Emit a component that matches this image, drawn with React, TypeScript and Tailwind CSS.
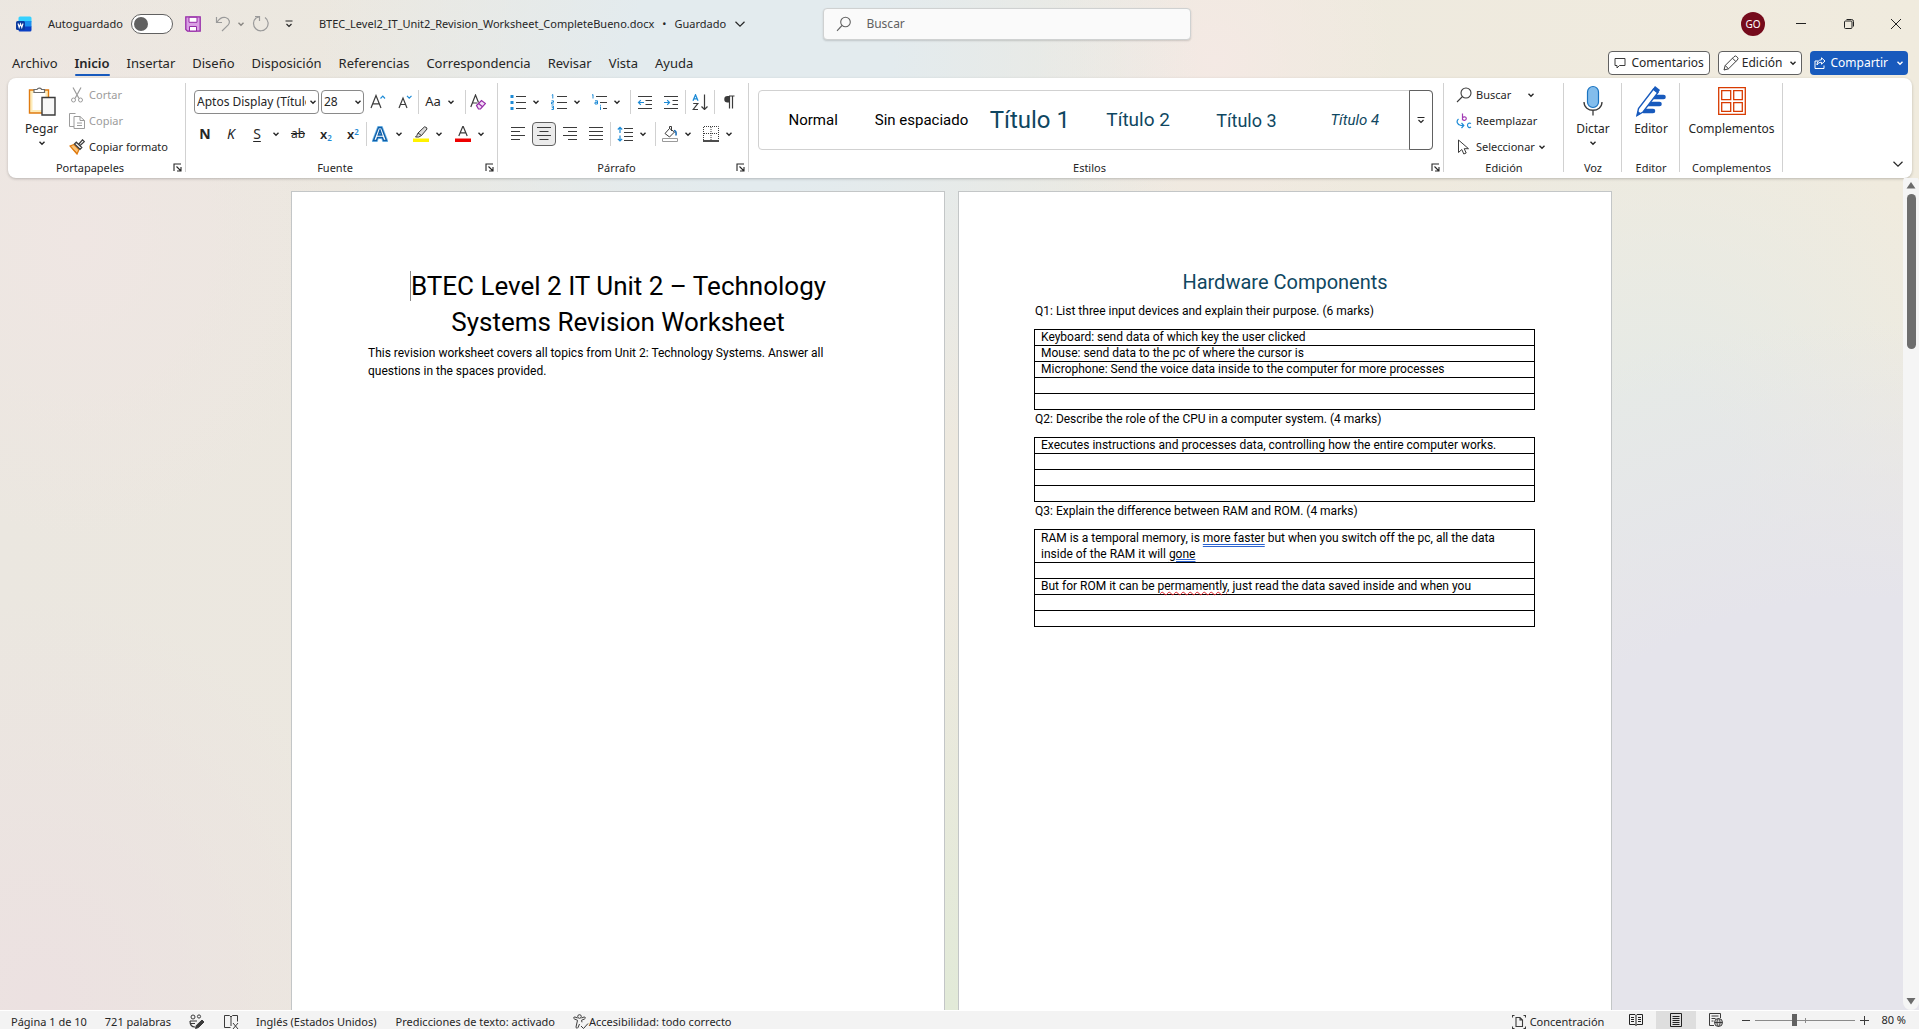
import React from "react";

type Kids = { children?: React.ReactNode };

/* ---------- shared pieces ---------- */

function Svg({ w = 16, h = 16, children, className = "" }: Kids & { w?: number; h?: number; className?: string }) {
  return (
    <svg width={w} height={h} viewBox={`0 0 ${w} ${h}`} fill="none" stroke="#3b3b3b" className={`shrink-0 ${className}`} aria-hidden="true">
      {children}
    </svg>
  );
}

function Chevron({ light = false }: { light?: boolean }) {
  return (
    <Svg w={8} h={8}>
      <path d="M1.5 2.8 4 5.2 6.5 2.8" stroke={light ? "#ffffff" : "#262626"} strokeWidth="1.4" />
    </Svg>
  );
}

function WideChevron() {
  return (
    <Svg w={12} h={8}>
      <path d="M1.5 1.8 6 6.2 10.5 1.8" stroke="#262626" strokeWidth="1.2" />
    </Svg>
  );
}

function IconButton({ label, children, className = "w-6" }: Kids & { label: string; className?: string }) {
  return (
    <button aria-label={label} title={label} className={`flex h-6 shrink-0 items-center justify-center ${className}`}>
      {children}
    </button>
  );
}

function Drop({ label }: { label: string }) {
  return (
    <button aria-label={label} className="flex h-6 w-3 shrink-0 items-center justify-center">
      <Chevron />
    </button>
  );
}

function Rule({ className = "" }: { className?: string }) {
  return <span className={`h-6 w-px shrink-0 bg-[#d1d1d1] ${className}`} />;
}

function Group({ label, launcher = false, className = "", children }: Kids & { label: string; launcher?: boolean; className?: string }) {
  return (
    <section aria-label={label} className={`relative flex shrink-0 flex-col ${className}`}>
      <div className="flex h-20 flex-col">{children}</div>
      <div className={`flex h-5 items-center justify-center text-[11px] leading-4 ${launcher ? "pr-3.5" : ""}`}>{label}</div>
      {launcher && (
        <button aria-label={`Opciones de ${label}`} className="absolute right-1 bottom-1.5">
          <Svg w={9} h={9}>
            <path d="M1 8V1h7M3.5 3.5 8 8M8 4v4H4" stroke="#262626" strokeWidth="1.1" />
          </Svg>
        </button>
      )}
      <span className="absolute top-[5px] right-0 h-[89px] w-px bg-[#d1d1d1]" />
    </section>
  );
}

/* ---------- title bar ---------- */

function TitleBar() {
  return (
    <header className="flex h-12 shrink-0 items-center text-[11px]">
      <div className="flex min-w-0 flex-[526_1_0%] items-center pl-4">
        <svg width="16" height="16" viewBox="0 0 16 16" aria-label="Word" className="shrink-0">
          <rect x="2.5" y="0.5" width="13" height="6" rx="1.5" fill="#35d1ff" />
          <rect x="2.5" y="5" width="13" height="6" fill="#1a8ff0" />
          <path d="M2.500 10.500h13V14a1.500 1.500 0 0 1-1.500 1.500H4A1.500 1.500 0 0 1 2.500 14z" fill="#0a3fc4" />
          <rect x="0" y="5" width="9" height="9" rx="1.500" fill="#0b3a9e" />
          <path d="m2 7.500 1.200 4 1.300-3.600 1.300 3.600 1.200-4" stroke="#fff" strokeWidth="1.100" fill="none" />
        </svg>
        <label className="ml-4 flex items-center gap-2">
          <span>Autoguardado</span>
          <span className="relative flex items-center">
            <input type="checkbox" role="switch" className="h-5 w-[42px] appearance-none rounded-full border border-[#616161] bg-white" />
            <span className="pointer-events-none absolute left-[3px] h-3.5 w-3.5 rounded-full bg-[#616161]" />
          </span>
        </label>
        <IconButton label="Guardar" className="ml-2 w-6">
          <Svg>
            <path d="M.8.800h14.400v14.400H2.500L.8 13.500z" fill="#d9a0e4" stroke="#962ba8" strokeWidth="1.300" />
            <path d="M4 1.300h8v5H4z" fill="#fff" stroke="#962ba8" />
            <path d="M4.500 10.500h7v4.500h-7z" fill="#fff" stroke="#962ba8" />
          </Svg>
        </IconButton>
        <IconButton label="Deshacer" className="ml-1.5 w-6">
          <Svg>
            <path d="M1.500 1v5.500H7M2 6.200C4 3 7 .800 10.500 1.500c4 1 5 5 2.500 7.700L7 15" stroke="#9a9a9a" strokeWidth="1.200" />
          </Svg>
        </IconButton>
        <span className="flex w-3 justify-center opacity-50"><Chevron /></span>
        <IconButton label="Rehacer" className="ml-0.5 w-6">
          <Svg w={18} h={18}>
            <path d="M3 1.500h4.500v4.500M13 2.500a7.300 7.300 0 1 1-9 .5L7 2" stroke="#9a9a9a" strokeWidth="1.200" />
          </Svg>
        </IconButton>
        <IconButton label="Personalizar barra" className="ml-1 w-6">
          <Svg w={8} h={8}>
            <path d="M.500 1h7M1.500 4 4 6.500 6.500 4" stroke="#262626" strokeWidth="1.200" />
          </Svg>
        </IconButton>
        <button className="ml-[18px] flex items-center gap-2 whitespace-nowrap">
          <span>BTEC_Level2_IT_Unit2_Revision_Worksheet_CompleteBueno.docx</span>
          <span>•</span>
          <span>Guardado</span>
          <WideChevron />
        </button>
      </div>
      <label className="flex h-8 w-[368px] shrink-0 items-center gap-3.5 rounded border border-[#cfd1d1] bg-[#fafafa] px-3 shadow-[0_1px_2px_rgba(0,0,0,0.16)]">
        <Svg>
          <circle cx="9.500" cy="6" r="4.800" stroke="#616161" strokeWidth="1.100" />
          <path d="M6 9.500 1 14.800" stroke="#616161" strokeWidth="1.100" />
        </Svg>
        <input type="text" placeholder="Buscar" aria-label="Buscar" className="min-w-0 flex-1 bg-transparent text-[12px] outline-none placeholder:text-[#616161]" />
      </label>
      <div className="flex flex-[474_1_0%] items-center justify-end">
        <button aria-label="Cuenta" className="mr-3 flex h-6 w-6 items-center justify-center rounded-full bg-[#750b1c] text-[10px] text-white">GO</button>
        <button aria-label="Minimizar" className="flex h-12 w-12 items-center justify-center"><Svg w={10} h={10}><path d="M0 4.500h10" stroke="#222" /></Svg></button>
        <button aria-label="Restaurar" className="flex h-12 w-12 items-center justify-center">
          <Svg w={10} h={10}><path d="M.500 3a1 1 0 0 1 1-1H7a1 1 0 0 1 1 1v5.500a1 1 0 0 1-1 1H1.500a1 1 0 0 1-1-1zM2.500.500h5a2 2 0 0 1 2 2v5" stroke="#222" /></Svg>
        </button>
        <button aria-label="Cerrar" className="flex h-12 w-[46px] items-center justify-center"><Svg w={10} h={10}><path d="m0 0 10 10M10 0 0 10" stroke="#222" /></Svg></button>
      </div>
    </header>
  );
}

/* ---------- tabs ---------- */

const TABS = ["Archivo", "Inicio", "Insertar", "Diseño", "Disposición", "Referencias", "Correspondencia", "Revisar", "Vista", "Ayuda"];

function TabRow() {
  return (
    <div className="flex h-[30px] shrink-0 items-start justify-between pr-[11px] pl-3">
      <nav className="flex gap-[17px] pt-[3px] text-[13px] leading-6">
        {TABS.map((t) => (
          <button key={t} className={t === "Inicio" ? "relative font-semibold" : ""}>
            {t}
            {t === "Inicio" && <span className="absolute inset-x-0 -bottom-px h-0.5 rounded bg-[#185abd]" />}
          </button>
        ))}
      </nav>
      <div className="flex gap-2 pt-[3px] text-[12px]">
        <button className="flex h-6 items-center gap-[5px] rounded border border-[#616161] bg-white px-[5px]">
          <Svg w={12} h={12}><path d="M1 1.500h10v7H5.500L3 11V8.500H1z" /></Svg>
          Comentarios
        </button>
        <button className="flex h-6 items-center gap-[3px] rounded border border-[#616161] bg-white px-1">
          <Svg>
            <path d="m1 15 1.200-4.500L11 1.700a1.900 1.900 0 0 1 2.800 0l.500.500a1.900 1.900 0 0 1 0 2.800L5.500 13.800zM9.500 3.200l3.300 3.300M2.200 10.500l3.300 3.300" />
          </Svg>
          Edición
          <span className="ml-1"><Chevron /></span>
        </button>
        <button className="flex h-6 items-center gap-1 rounded bg-[#185abd] px-1 text-white">
          <Svg w={12} h={12}>
            <path d="M4 4H1v7.500h9V8.500M7.500.800 11 4 7.500 7.200V5.300C5.500 5.300 4 6 3 8c0-3 1.500-5 4.500-5.300z" stroke="#fff" />
          </Svg>
          Compartir
          <span className="ml-1"><Chevron light /></span>
        </button>
      </div>
    </div>
  );
}

/* ---------- ribbon ---------- */

function SmallCommand({ icon, label, disabled = false, drop = "" }: { icon: React.ReactNode; label: string; disabled?: boolean; drop?: string }) {
  return (
    <button disabled={disabled} className={`flex h-[26px] items-center gap-1 text-[11px] whitespace-nowrap ${disabled ? "text-[#9c9c9c]" : ""}`}>
      {icon}
      <span>{label}</span>
      {drop && <span className={drop}><Chevron /></span>}
    </button>
  );
}

function BigCommand({ icon, label, drop = false }: { icon: React.ReactNode; label: string; drop?: boolean }) {
  return (
    <button className="flex flex-col items-center pt-[7px] text-[12px] leading-4">
      <span className="flex h-9 items-start justify-center">{icon}</span>
      <span>{label}</span>
      {drop && <span className="mt-0.5"><Chevron /></span>}
    </button>
  );
}

function Clipboard() {
  return (
    <Group label="Portapapeles" launcher className="w-[178px]">
      <div className="flex gap-[11px] pl-[17px]">
        <BigCommand
          label="Pegar"
          drop
          icon={
            <Svg w={28} h={32}>
              <path d="M1.500 5h19v23h-19z" fill="#fdebb8" stroke="#e07b10" strokeWidth="1.400" />
              <path d="M4.500 8h13v17h-13z" fill="#fff" stroke="none" />
              <path d="M6 7.500V4.500h3a2.800 2.800 0 0 1 4.500-.3v.3h3v3z" fill="#fff" stroke="#6b6b6b" strokeWidth="1.200" />
              <path d="M14 12.500h13V30H14z" fill="#f8f8f8" strokeWidth="1.400" />
            </Svg>
          }
        />
        <div className="flex flex-col pt-1">
          <SmallCommand
            disabled
            label="Cortar"
            icon={<Svg><path d="m4 .500 6 11M12 .500l-6 11" stroke="#9c9c9c" strokeWidth="1.200" /><circle cx="4.500" cy="13" r="2" stroke="#9c9c9c" /><circle cx="11.500" cy="13" r="2" stroke="#9c9c9c" /></Svg>}
          />
          <SmallCommand
            disabled
            label="Copiar"
            icon={<Svg><path d="M5 13.500H.500V.500h6M5 3.500h6l4.500 4v8H5z" stroke="#9c9c9c" /><path d="M11 3.500v4h4.500M8 10h5M8 12.500h5" stroke="#9c9c9c" /></Svg>}
          />
          <SmallCommand
            label="Copiar formato"
            icon={
              <Svg>
                <path d="m1 7 4-1.500 5 5L8 15z" fill="#f9c47a" stroke="#e07b10" strokeWidth="1.300" />
                <path d="m3.500 10 4 3.500" stroke="#e07b10" />
                <path d="m5.500 5 1.800-1.800 5.500 5.300-1.800 1.800zM9.500 5.500 13.500.800l1.800 1.800-4.500 4.200" fill="#fff" strokeWidth="1.200" />
              </Svg>
            }
          />
        </div>
      </div>
    </Group>
  );
}

function FontGroup() {
  return (
    <Group label="Fuente" launcher className="w-[312px]">
      <div className="flex h-9 items-end pl-2">
        <span className="relative flex items-center">
          <select aria-label="Fuente" className="h-6 w-[125px] appearance-none rounded border border-[#8a8a8a] bg-white pr-3 pl-0.5 text-[12px]">
            <option>Aptos Display (Título)</option>
          </select>
          <span className="pointer-events-none absolute right-0.5 bg-white"><Chevron /></span>
        </span>
        <span className="relative ml-0.5 flex items-center">
          <select aria-label="Tamaño de fuente" className="h-6 w-[43px] appearance-none rounded border border-[#8a8a8a] bg-white pl-0.5 text-[12px]">
            <option>28</option>
          </select>
          <span className="pointer-events-none absolute right-0.5"><Chevron /></span>
        </span>
        <IconButton label="Aumentar tamaño" className="w-7">
          <Svg><path d="m1 14 5-12.500L11 14M2.800 9.800h6.400" strokeWidth="1.200" /><path d="m10.500 4.500 2.300-2.300L15 4.500" stroke="#1e8bd6" strokeWidth="1.200" /></Svg>
        </IconButton>
        <IconButton label="Reducir tamaño" className="w-[26px]">
          <Svg w={14}><path d="m1 14 4-10 4 10M2.500 10.500h5" strokeWidth="1.200" /><path d="m9 1.800 2.200 2.300 2.300-2.300" stroke="#1e8bd6" strokeWidth="1.200" /></Svg>
        </IconButton>
        <Rule />
        <IconButton label="Mayúsculas y minúsculas" className="ml-0.5 w-6 text-[13px]">Aa</IconButton>
        <Drop label="Más opciones de mayúsculas" />
        <Rule className="ml-2" />
        <IconButton label="Borrar formato" className="w-6">
          <Svg><path d="M.800 13 5.500 1l3 7.500M2.300 9h5" strokeWidth="1.200" /><path d="m6.500 11.500 5-5 4 3-5 5.500h-2zM8.500 9.500l4 3.300" fill="#f3dcf7" stroke="#962ba8" strokeWidth="1.200" /></Svg>
        </IconButton>
      </div>
      <div className="mt-2 flex h-6 items-center pl-1.5 leading-5">
        <IconButton label="Negrita" className="w-[26px] text-[14px] font-bold">N</IconButton>
        <IconButton label="Cursiva" className="w-[26px] text-[14px] italic">K</IconButton>
        <IconButton label="Subrayado" className="w-[26px] text-[14px] underline underline-offset-2">S</IconButton>
        <Drop label="Estilo de subrayado" />
        <IconButton label="Tachado" className="ml-0.5 w-7 text-[12px] line-through">ab</IconButton>
        <IconButton label="Subíndice" className="w-7 text-[13px] font-semibold"><span>x<sub className="text-[8px] text-[#1e8bd6]">2</sub></span></IconButton>
        <IconButton label="Superíndice" className="w-[26px] text-[13px] font-semibold"><span>x<sup className="text-[8px] text-[#1e8bd6]">2</sup></span></IconButton>
        <Rule />
        <IconButton label="Efectos de texto" className="w-[26px]">
          <Svg>
            <path d="M1.500 14.500 6.500 1.500h3l5 13h-3l-1-3h-5l-1 3zM6.300 9h3.400L8 4z" fill="#fff" stroke="#7ec0ee" strokeWidth="3" />
            <path d="M1.500 14.500 6.500 1.500h3l5 13h-3l-1-3h-5l-1 3zM6.300 9h3.400L8 4z" fill="#fff" stroke="#0f5ea8" strokeWidth="1.400" />
          </Svg>
        </IconButton>
        <Drop label="Más efectos" />
        <IconButton label="Color de resaltado" className="ml-1 w-6">
          <Svg>
            <path d="M0 12.500h16v3.500H0z" fill="#fff200" stroke="none" />
            <path d="M5 7 11.500.800l2 .700.500 1.500L8.500 9.500zM5 7l-1.200 2.500L2.500 11h3.300L8.500 9.500" fill="#d9d9d9" />
          </Svg>
        </IconButton>
        <Drop label="Más colores de resaltado" />
        <IconButton label="Color de fuente" className="ml-1.5 w-6">
          <Svg>
            <path d="M0 12.500h16v3.500H0z" fill="#ee0000" stroke="none" />
            <path d="M3.800 10 8 0l4.200 10M5.300 6.800h5.400" strokeWidth="1.200" />
          </Svg>
        </IconButton>
        <Drop label="Más colores de fuente" />
      </div>
    </Group>
  );
}

function Lines({ d }: { d: string }) {
  return <Svg w={14}><path d={d} stroke="#3b3b3b" /></Svg>;
}

function ParagraphGroup() {
  return (
    <Group label="Párrafo" launcher className="w-[251px]">
      <div className="flex h-9 items-end pl-2">
        <IconButton label="Viñetas">
          <Svg><path d="M6 2.500h10M6 8.500h10M6 14.500h10" /><path d="M.500 1h3v3h-3zM.500 7h3v3h-3zM.500 13h3v3h-3z" fill="#1e8bd6" stroke="none" /></Svg>
        </IconButton>
        <Drop label="Más viñetas" />
        <IconButton label="Numeración" className="ml-[5px] w-6">
          <Svg>
            <path d="M6 2.500h10M6 8.500h10M6 14.500h10" />
            <path d="m.800 1.200 1-.700v4M.500 6.800h2v1.500h-2V10h2.300M.500 12h2v3.500h-2M.800 13.700h1.700" stroke="#1e8bd6" />
          </Svg>
        </IconButton>
        <Drop label="Más numeración" />
        <IconButton label="Lista multinivel" className="ml-1 w-6">
          <Svg>
            <path d="M5 2.500h11M9 8.500h7M12 14.500h4" />
            <path d="m1 1.200 1-.700v4M4 6.800h2.500V10H4V8.300h2.500M9.500 12.500V16M9.500 10.800v1" stroke="#1e8bd6" />
          </Svg>
        </IconButton>
        <Drop label="Más listas" />
        <Rule className="ml-[7px]" />
        <IconButton label="Disminuir sangría" className="ml-0.5 w-6">
          <Svg><path d="M1 2.500h14M8.500 6.500H15M8.500 10.500H15M1 14.500h14" /><path d="M7 8.500H1.500M3.800 6.200 1.500 8.500l2.300 2.300" stroke="#1e8bd6" strokeWidth="1.200" /></Svg>
        </IconButton>
        <IconButton label="Aumentar sangría" className="ml-0.5 w-6">
          <Svg><path d="M1 2.500h14M9.500 6.500H15M9.500 10.500H15M1 14.500h14" /><path d="M1 8.500h5.500M4.200 6.200l2.300 2.300-2.300 2.300" stroke="#1e8bd6" strokeWidth="1.200" /></Svg>
        </IconButton>
        <Rule className="ml-0.5" />
        <IconButton label="Ordenar" className="ml-0.5 w-6">
          <Svg>
            <path d="m1 6.800 2.500-6 2.500 6M1.800 4.800h3.400" stroke="#1e8bd6" strokeWidth="1.300" />
            <path d="M1.200 9.500h4.600l-4.600 6h4.800M12.500.500v15M9.500 12.500l3 3 3-3" strokeWidth="1.200" />
          </Svg>
        </IconButton>
        <Rule className="ml-0.5" />
        <IconButton label="Mostrar todo" className="ml-0.5 w-6">
          <Svg w={12} h={14}><path d="M6 1h5.500M6.500 1v12.500M9.500 1v12.500" strokeWidth="1.200" /><path d="M6.500 1v6.500h-2a3.200 3.200 0 0 1 0-6.500z" fill="#3b3b3b" stroke="none" /></Svg>
        </IconButton>
      </div>
      <div className="mt-2 flex h-6 items-center pl-2">
        <IconButton label="Alinear a la izquierda"><Lines d="M0 1.500h14M0 5.500h9M0 9.500h14M0 13.500h9" /></IconButton>
        <IconButton label="Centrar" className="ml-0.5 w-6 rounded border border-[#616161] bg-[#ebebeb]"><Lines d="M0 1.500h14M2.500 5.500h9M0 9.500h14M2.500 13.500h9" /></IconButton>
        <IconButton label="Alinear a la derecha" className="ml-0.5 w-6"><Lines d="M0 1.500h14M5 5.500h9M0 9.500h14M5 13.500h9" /></IconButton>
        <IconButton label="Justificar" className="ml-0.5 w-6"><Lines d="M0 1.500h14M0 5.500h14M0 9.500h14M0 13.500h14" /></IconButton>
        <Rule className="ml-0.5" />
        <IconButton label="Espaciado" className="ml-0.5 w-6">
          <Svg><path d="M7 2.500h9M7 6.500h9M7 10.500h9M7 14.500h9" /><path d="M3 1.500V7M.800 3.500 3 1.300l2.200 2.200M3 9.500V15M.800 12.800 3 15l2.200-2.200" stroke="#1e8bd6" strokeWidth="1.200" /></Svg>
        </IconButton>
        <Drop label="Más espaciado" />
        <Rule className="ml-1.5" />
        <IconButton label="Sombreado" className="ml-0.5 w-6">
          <Svg>
            <path d="M.500 12.500h15v3H.500z" fill="#fff" stroke="#9a9a9a" />
            <path d="M7.500 2.500 3 7.500l4.500 3.500 5-5zM7.500 2.500V.500h2V5" />
            <path d="M12 4.500c1.500 0 2.500 1.500 2 5" stroke="#1e6fb8" strokeWidth="1.600" />
          </Svg>
        </IconButton>
        <Drop label="Más sombreado" />
        <IconButton label="Bordes" className="ml-[5px] w-6">
          <Svg><path d="M.500 14V.500h15V14M8 1v13M1 7.500h14" strokeDasharray="1 1" /><path d="M0 15h16" stroke="#000" strokeWidth="1.400" /></Svg>
        </IconButton>
        <Drop label="Más bordes" />
      </div>
    </Group>
  );
}

const STYLES = [
  ["Normal", "text-[15px] text-black"],
  ["Sin espaciado", "text-[15px] text-black"],
  ["Título 1", "text-[24px] text-[#0f4761]"],
  ["Título 2", "text-[19px] text-[#0f4761]"],
  ["Título 3", "text-[18px] text-[#0f4761]"],
  ["Título 4", "text-[15px] italic text-[#0f4761]"],
];

function StylesGroup() {
  return (
    <Group label="Estilos" launcher className="min-w-0 flex-1">
      <div className="mt-3 mr-[11px] ml-[9px] flex h-15 rounded border border-[#d1d1d1] font-['Roboto',sans-serif]">
        {STYLES.map(([name, look]) => (
          <button key={name} className={`min-w-0 flex-1 basis-0 overflow-hidden whitespace-nowrap ${look}`}>{name}</button>
        ))}
        <button aria-label="Más estilos" className="-my-px -mr-px flex w-6 items-center justify-center rounded-r border border-[#616161]">
          <Svg w={8} h={8}><path d="M.500 1.500h7M1.500 4 4 6.500 6.500 4" stroke="#262626" strokeWidth="1.200" /></Svg>
        </button>
      </div>
    </Group>
  );
}

function RightGroups() {
  return (
    <>
      <Group label="Edición" className="w-[120px]">
        <div className="flex flex-col items-start pt-1 pl-3">
          <SmallCommand label="Buscar" drop="ml-3" icon={<Svg><circle cx="10" cy="6" r="5" strokeWidth="1.100" /><path d="M6.500 9.500 1 15" strokeWidth="1.100" /></Svg>} />
          <SmallCommand
            label="Reemplazar"
            icon={
              <Svg>
                <path d="M6.500.500v6.800M6.500 4.800c1-1.300 3.800-1.300 3.800.800s-2.800 2.200-3.800.700" stroke="#a33cb5" strokeWidth="1.200" />
                <path d="M15 10.500c-1.500-1-3.500-.300-3.500 1.800s2 2.800 3.500 1.800M2.500 6C0 8 1 12 5 12.500h2.500M5.500 10l2.300 2.500L5.500 15" stroke="#1e8bd6" strokeWidth="1.200" />
              </Svg>
            }
          />
          <SmallCommand label="Seleccionar" icon={<Svg><path d="M2.500 1v12.500l3.300-3 2 4.500 2.400-1-2-4.300h4.300z" /></Svg>} drop="-ml-px" />
        </div>
      </Group>
      <Group label="Voz" className="w-[58px]">
        <BigCommand
          label="Dictar"
          drop
          icon={<Svg w={20} h={32}><rect x="4.500" y="1.500" width="11" height="21" rx="5.500" fill="#83bdec" stroke="#1a73c0" strokeWidth="1.200" /><path d="M1 17c0 11 18 11 18 0M10 25v5.500" strokeWidth="1.300" /></Svg>}
        />
      </Group>
      <Group label="Editor" className="w-[58px]">
        <BigCommand
          label="Editor"
          icon={
            <Svg w={32} h={32}>
              <path d="M17 12h11.500M13 19h11.500M8.500 26H18" stroke="#185abd" strokeWidth="4.600" strokeLinecap="round" />
              <path d="m2 30.500 1.500-7L18.500 4l4.500 3.500L8 27z" fill="#fff" stroke="#185abd" strokeWidth="1.400" />
              <path d="M17.500 4.500 20 1l5 4-2.500 3.500zM1.500 31l1.200-5 3.500 2.500z" fill="#185abd" stroke="none" />
            </Svg>
          }
        />
      </Group>
      <Group label="Complementos" className="w-[103px]">
        <BigCommand
          label="Complementos"
          icon={<Svg w={28} h={32}><path d="M.700 2.700h26.600v26.600H.700zM3.700 5.700h9v9h-9zM15.700 5.700h8.600v9h-8.600zM3.700 17.700h9v8.600h-9zM15.700 17.700h8.600v8.600h-8.600z" stroke="#d83b01" strokeWidth="1.300" /></Svg>}
        />
      </Group>
      <div className="flex w-[129px] shrink-0 items-end justify-end pr-2 pb-2.5">
        <button aria-label="Contraer la cinta"><WideChevron /></button>
      </div>
    </>
  );
}

/* ---------- document ---------- */

function Page({ children }: Kids) {
  return <article className="w-[654px] shrink-0 border border-b-0 border-[#c3c6c7] bg-white px-[76px] pt-[76px] text-[12px] leading-[18px] text-black">{children}</article>;
}

function Question({ title, rows }: { title: string; rows: React.ReactNode[] }) {
  return (
    <section>
      <h3 className="mb-[9px]">{title}</h3>
      <table className="-ml-px w-[calc(100%+1px)] border-collapse leading-[15px]" aria-label={title}>
        <tbody>
          {rows.map((row, i) => (
            <tr key={i}>
              <td className="h-4 border border-black px-1.5 py-0">{row}</td>
            </tr>
          ))}
        </tbody>
      </table>
    </section>
  );
}

function Workspace() {
  return (
    <main className="flex min-h-0 flex-1 overflow-hidden">
      <div className="flex min-w-0 flex-1 justify-center gap-[13px] overflow-hidden pt-[13px] font-['Roboto',sans-serif]">
        <Page>
          <h1 className="mb-1 text-center text-[26px] leading-9">
            <span className="border-l border-[#8a8a8a]">BTEC Level 2 IT Unit 2 – Technology</span>
            <br />
            Systems Revision Worksheet
          </h1>
          <p>This revision worksheet covers all topics from Unit 2: Technology Systems. Answer all questions in the spaces provided.</p>
        </Page>
        <Page>
          <h2 className="mb-1.5 text-center text-[20px] leading-7 text-[#0f4761]">Hardware Components</h2>
          <Question
            title="Q1: List three input devices and explain their purpose. (6 marks)"
            rows={["Keyboard: send data of which key the user clicked", "Mouse: send data to the pc of where the cursor is", "Microphone: Send the voice data inside to the computer for more processes", "", ""]}
          />
          <Question
            title="Q2: Describe the role of the CPU in a computer system. (4 marks)"
            rows={["Executes instructions and processes data, controlling how the entire computer works.", "", "", ""]}
          />
          <Question
            title="Q3: Explain the difference between RAM and ROM. (4 marks)"
            rows={[
              <div className="leading-4">
                RAM is a temporal memory, is <span className="underline decoration-[#2b63d0] decoration-double underline-offset-2">more faster</span> but when you switch off the pc, all the data
                <br />
                inside of the RAM it will <span className="underline decoration-[#2b63d0] decoration-double underline-offset-1">gone</span>
              </div>,
              "",
              <>
                But for ROM it can be <span className="underline decoration-[#e0242b] decoration-wavy decoration-1 underline-offset-1">permamently</span>, just read the data saved inside and when you
              </>,
              "",
              "",
            ]}
          />
        </Page>
      </div>
      <div className="-mt-1 flex w-4 shrink-0 flex-col items-center rounded-lg bg-[#f5f5f5] pt-1.5 pb-1" role="scrollbar" aria-label="Desplazamiento vertical" aria-controls="root" aria-valuenow={0}>
        <svg width="10" height="10" viewBox="0 0 10 10" aria-hidden="true"><path d="M5 2 9.500 8.500H.500z" fill="#6b6b6b" /></svg>
        <span className="mt-1 h-[155px] w-[9px] shrink-0 rounded-full bg-[#6e6e6e]" />
        <svg width="10" height="10" viewBox="0 0 10 10" className="mt-auto" aria-hidden="true"><path d="M5 8.500 9.500 2H.500z" fill="#6b6b6b" /></svg>
      </div>
    </main>
  );
}

/* ---------- status bar ---------- */

function StatusBar() {
  return (
    <footer className="flex h-[19px] shrink-0 items-center justify-between border-t border-white bg-[#f3f3f3] pt-1 text-[11px] leading-4 whitespace-nowrap">
      <div className="flex items-center pl-[11px]">
        <button>Página 1 de 10</button>
        <button className="ml-[18px]">721 palabras</button>
        <button aria-label="Coautores" className="ml-[18px]">
          <Svg>
            <circle cx="4" cy="3" r="2" /><circle cx="10" cy="2.500" r="1.600" />
            <path d="M1 7h7M1 7c0 5 2.500 6 5 6M1 9.500h5" strokeWidth="1.200" />
            <path d="m6.500 14.500.800-3L13 6l2 2-5.500 5.500z" fill="#3b3b3b" />
          </Svg>
        </button>
        <button aria-label="Revisión ortográfica" className="ml-[19px]">
          <Svg><path d="M6.500 13.500H.500V1.500h5l1.500 1.500 1.500-1.500h5v6M7 3v9M9 9l5 6M14 9l-5 6" /></Svg>
        </button>
        <button className="ml-4">Inglés (Estados Unidos)</button>
        <button className="ml-[19px]">Predicciones de texto: activado</button>
        <button className="ml-[18px] flex items-center">
          <Svg>
            <circle cx="6.500" cy="2.500" r="1.800" />
            <path d="M4.500 4 2 3c-1.500-.300-1.800 1.500-.500 2l3 1.300L3 13c0 1.500 1.500 1.500 2 .500L6.500 10M8.500 4 11 3c1.500-.300 1.800 1.500.500 2l-3 1.300.500 2M8 12l2.500 2.500L15 9.500" />
          </Svg>
          Accesibilidad: todo correcto
        </button>
      </div>
      <div className="flex items-center pr-[13px]">
        <button className="flex items-center gap-1">
          <Svg w={14} h={14}><path d="M2.500.500h-2v2M.500 11.500v2h2M11.500.500h2v2M13.500 11.500v2h-2M4 2.500h4l2.500 2.500v6.500H4zM8 2.500V5h2.500" strokeWidth="1.100" /></Svg>
          Concentración
        </button>
        <button aria-label="Modo de lectura" className="-mt-1 ml-3 flex h-[19px] w-10 items-center justify-center">
          <Svg w={14} h={14}><path d="M.500 1.500H6l1 1 1-1h5.500v10H8l-1 1-1-1H.500zM7 2.500v10M2 4.500h3M2 6.500h3M2 8.500h3M9 4.500h3M9 6.500h3M9 8.500h3" stroke="#222" /></Svg>
        </button>
        <button aria-label="Diseño de impresión" aria-pressed="true" className="-mt-1 flex h-[19px] w-10 items-center justify-center bg-[#dedede]">
          <Svg w={12} h={14}><path d="M.500.500h11v13H.500zM2.500 3.500h7M2.500 5.500h7M2.500 7.500h7M2.500 9.500h7M2.500 11.500h7" stroke="#222" /></Svg>
        </button>
        <button aria-label="Diseño web" className="-mt-1 flex h-[19px] w-10 items-center justify-center">
          <Svg w={14} h={14}><path d="M5 12.500H.500V.500h11V5M2.500 3h7M2.500 5.500h4M2.500 8h2" /><circle cx="9.500" cy="9.500" r="4" fill="#d0d0d0" /><path d="M5.500 9.500h8M9.500 5.500c-2 2-2 6 0 8M9.500 5.500c2 2 2 6 0 8" /></Svg>
        </button>
        <button aria-label="Alejar" className="-mt-1 ml-1.5"><Svg w={8} h={8}><path d="M0 4.500h8" /></Svg></button>
        <span className="relative -mt-1 ml-[5px] flex w-25 items-center">
          <input
            type="range"
            aria-label="Zoom"
            min={0}
            max={100}
            defaultValue={39}
            className="h-3 w-full appearance-none bg-[linear-gradient(#8a8a8a,#8a8a8a)] bg-[length:100%_1px] bg-center bg-no-repeat [&::-webkit-slider-thumb]:h-3 [&::-webkit-slider-thumb]:w-[5px] [&::-webkit-slider-thumb]:appearance-none [&::-webkit-slider-thumb]:bg-[#616161]"
          />
          <span className="pointer-events-none absolute left-1/2 h-[5px] w-px bg-[#8a8a8a]" />
        </span>
        <button aria-label="Acercar" className="-mt-1 ml-[5px]"><Svg w={9} h={9}><path d="M0 4.500h9M4.500 0v9" /></Svg></button>
        <button className="-mt-1 ml-3">80 %</button>
      </div>
    </footer>
  );
}

/* ---------- app ---------- */

export default function App() {
  return (
    <div className="flex h-screen flex-col overflow-hidden bg-[#ece8e0] bg-[radial-gradient(ellipse_440px_420px_at_760px_60px,#e3ebee_30%,#e3ebee00_100%),radial-gradient(ellipse_180px_200px_at_1215px_60px,#f4e9e4_0%,#f4e9e400_100%),radial-gradient(ellipse_260px_300px_at_80px_240px,#efe6e3_0%,#efe6e300_100%),radial-gradient(ellipse_340px_400px_at_40px_1000px,#ece1e1_0%,#ece1e100_100%),radial-gradient(ellipse_300px_420px_at_950px_1000px,#e2ead8_0%,#e2ead800_100%),radial-gradient(ellipse_700px_620px_at_1860px_940px,#e5e4eb_55%,#e5e4eb00_100%),radial-gradient(ellipse_340px_360px_at_1660px_460px,#e6eae6_20%,#e6eae600_100%),linear-gradient(to_right,#ebe7e0,#f0ebde)] font-['Noto_Sans',sans-serif] text-[#262626]">
      <TitleBar />
      <TabRow />
      <div className="mr-[7px] ml-2 flex h-25 shrink-0 rounded-lg bg-white shadow-[0_1px_3px_rgba(0,0,0,0.22)]">
        <Clipboard />
        <FontGroup />
        <ParagraphGroup />
        <StylesGroup />
        <RightGroups />
      </div>
      <Workspace />
      <StatusBar />
    </div>
  );
}
